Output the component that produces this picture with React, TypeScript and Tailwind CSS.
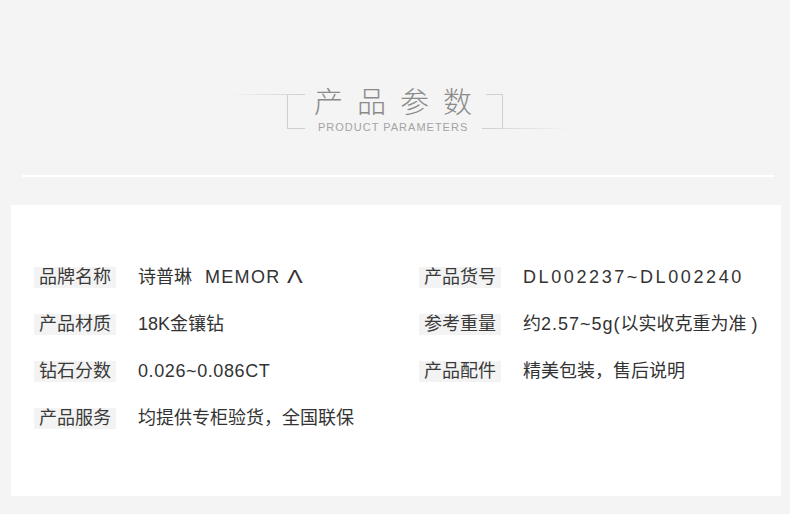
const specs = [
  [
    { label: '品牌名称', value: <><span>诗普琳</span><span className="ml-[13px] tracking-[1.3px]">MEMOR</span><span className="ml-[6px] inline-block scale-x-[1.3] origin-left">Λ</span></> },
    { label: '产品货号', value: <span className="tracking-[2.6px]">DL002237~DL002240</span> },
  ],
  [
    { label: '产品材质', value: '18K金镶钻' },
    { label: '参考重量', value: <>约<span className="tracking-[1px]">2.57~5g(</span>以实收克重为准 )</> },
  ],
  [
    { label: '钻石分数', value: <span className="tracking-[0.6px]">0.026~0.086CT</span> },
    { label: '产品配件', value: '精美包装，售后说明' },
  ],
  [{ label: '产品服务', value: '均提供专柜验货，全国联保' }],
];

const SpecItem = ({ label, value }: { label: string; value: React.ReactNode }) => (
  <div className="flex items-center">
    <span className="bg-[#f3f3f3] px-[5px] h-[21px] leading-[21px] text-[18px] text-[#3a3a3a] whitespace-nowrap">
      {label}
    </span>
    <span className="ml-[22px] text-[18px] leading-[21px] text-[#333] whitespace-nowrap">{value}</span>
  </div>
);

const App = () => {
  return (
    <div
      className="w-[790px] h-[514px] bg-[#f4f4f4] overflow-hidden"
      style={{ fontFamily: '"Liberation Sans", "Noto Sans CJK SC", sans-serif' }}
    >
      {/* title block */}
      <div className="flex justify-center pt-[80px] pl-[10px]">
        <div className="w-[75px] mt-[14px] flex flex-col items-end">
          <div className="h-px w-full bg-gradient-to-r from-transparent to-[#cfcfcf]" />
          <div className="w-[18px] h-[34px] border-l border-b border-[#cfcfcf]" />
        </div>
        <div className="w-[177px]">
          <div className="pl-[9px] mt-[5px] text-[29px] leading-[36px] tracking-[14px] font-light text-[#8a8a8a] whitespace-nowrap">
            产品参数
          </div>
          <div className="pl-[13px] mt-0 text-[11px] leading-[13px] tracking-[1px] text-[#a3a3a3] whitespace-nowrap">
            PRODUCT PARAMETERS
          </div>
        </div>
        <div className="w-[88px] mt-[14px] flex flex-col">
          <div className="ml-[4px] w-[17px] h-[34px] border-t border-r border-[#cfcfcf]" />
          <div className="h-px w-full bg-gradient-to-r from-[#cfcfcf] to-transparent" />
        </div>
      </div>

      <div className="mx-[22px] w-[752px] h-[2px] bg-white mt-[41px]" />

      {/* spec card */}
      <div className="mt-[28px] ml-[11px] w-[770px] h-[291px] bg-white pt-[62px] pl-[23px]">
        <div className="flex flex-col gap-[26px]">
          {specs.map((row, i) => (
            <div key={i} className="grid grid-cols-[385px_1fr]">
              {row.map((item) => (
                <SpecItem key={item.label} label={item.label} value={item.value} />
              ))}
            </div>
          ))}
        </div>
      </div>
    </div>
  );
};

export default App;
